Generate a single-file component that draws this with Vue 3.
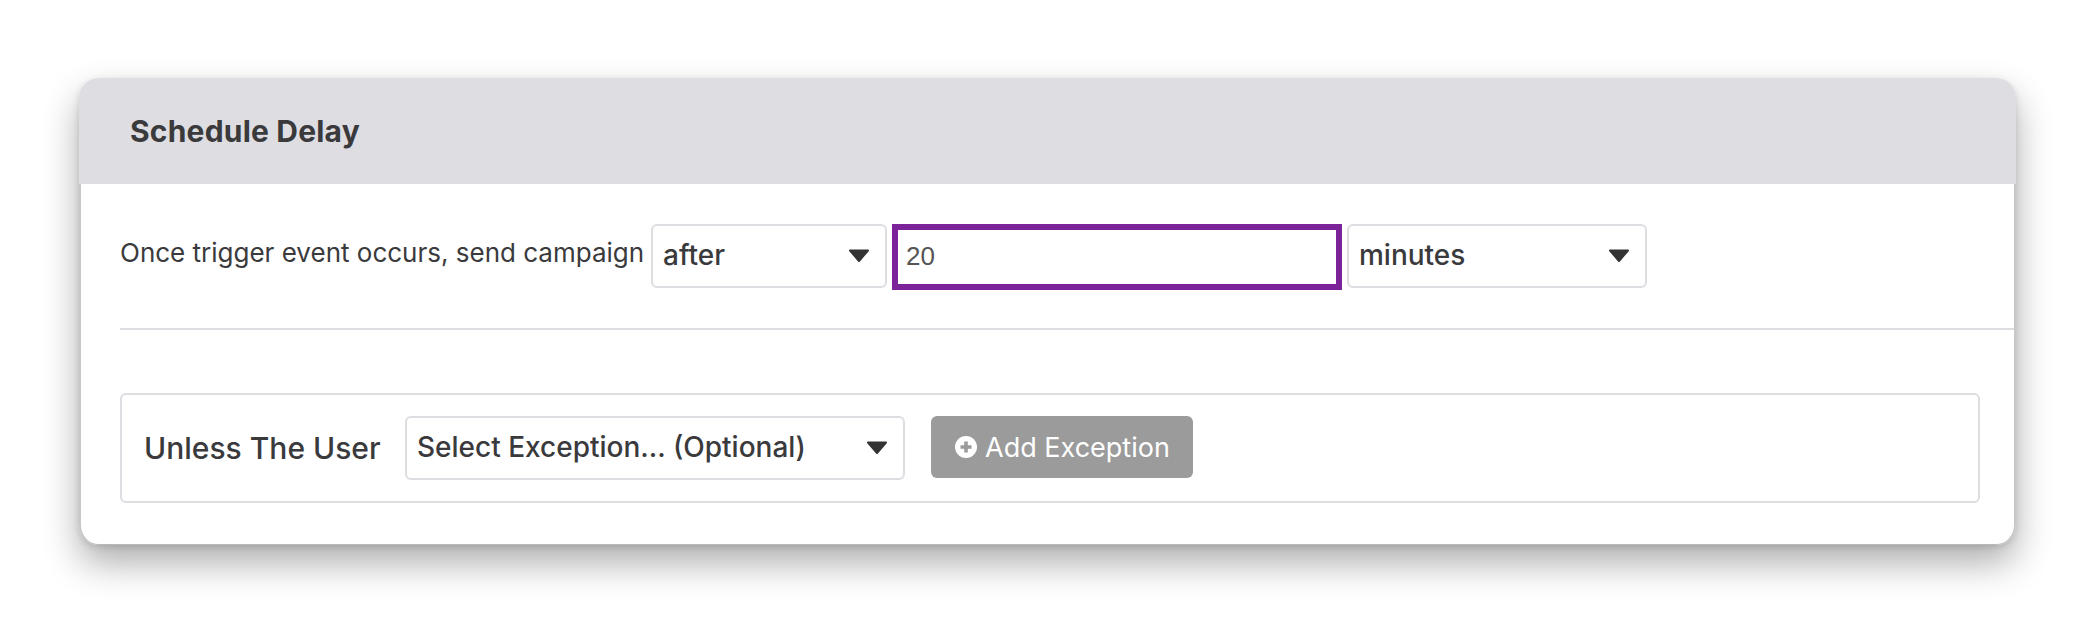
<template>
  <div class="page">
    <div class="card">
      <div class="card-head">Schedule Delay</div>
      <div class="card-body">
        <div class="row">
          <span class="lead">Once trigger event occurs, send campaign</span>
          <div class="select sel-after">
            <span>after</span>
            <svg class="caret" width="22" height="13" viewBox="0 0 22 13"><path d="M2 1.5h18L11 12z" fill="#333" stroke="#333" stroke-width="2" stroke-linejoin="round"/></svg>
          </div>
          <input class="num" type="text" value="20" />
          <div class="select sel-unit">
            <span>minutes</span>
            <svg class="caret" width="22" height="13" viewBox="0 0 22 13"><path d="M2 1.5h18L11 12z" fill="#333" stroke="#333" stroke-width="2" stroke-linejoin="round"/></svg>
          </div>
        </div>
        <hr class="sep" />
        <div class="except">
          <span class="except-label">Unless The User</span>
          <div class="select sel-except">
            <span>Select Exception... (Optional)</span>
            <svg class="caret" width="22" height="13" viewBox="0 0 22 13"><path d="M2 1.5h18L11 12z" fill="#333" stroke="#333" stroke-width="2" stroke-linejoin="round"/></svg>
          </div>
          <button class="add">
            <svg width="22" height="22" viewBox="0 0 22 22"><circle cx="11" cy="11" r="11" fill="#fff"/><path d="M11 5.5v11M5.5 11h11" stroke="#9b9b9b" stroke-width="3.6"/></svg>
            <span>Add Exception</span>
          </button>
        </div>
      </div>
    </div>
  </div>
</template>
<script setup>
</script>
<style>
html, body { background: #fff; }
</style>
<style scoped>
.page { padding: 78px 78px 80px 79px; font-family: Inter, "Liberation Sans", sans-serif; color: #3a3a3c; }
.card { border-radius: 20px; box-shadow: 0 18px 36px rgba(0,0,0,.32), 0 2px 6px rgba(0,0,0,.12); background: #fff; }
.card-head { height: 106px; box-sizing: border-box; padding: 0 51px; display: flex; align-items: center; background: #dedee2; border-radius: 20px 20px 0 0; font-size: 30px; font-weight: 700; letter-spacing: .2px; }
.card-body { height: 361px; box-sizing: border-box; padding: 40px 0 0 41px; border-radius: 0 0 20px 20px; background: #fff; box-shadow: inset 2px 0 0 #c8c8c8, inset -2px 0 0 #c8c8c8, inset 0 -1px 0 #b8b8b8; }
.row { display: flex; align-items: flex-start; height: 66px; }
.lead { font-size: 26px; line-height: 58px; width: 523px; white-space: nowrap; margin-right: 8px; }
.select { height: 64px; box-sizing: border-box; border: 2px solid #dddde2; border-radius: 6px; background: #fff; display: flex; align-items: center; justify-content: space-between; padding: 0 15px 2px 10px; font-size: 28px; font-weight: 500; white-space: nowrap; }
.sel-after { width: 236px; }
.sel-unit { width: 300px; }
.sel-except { width: 500px; }
.num { width: 450px; height: 66px; box-sizing: border-box; margin: 0 5px; border: 6px solid #7c2399; padding: 0 8px 2px; font-family: "Liberation Sans", sans-serif; font-size: 26px; color: #555; outline: none; background: #fff; }
.sep { margin: 38px 2px 0 0; border: 0; height: 2px; background: #dddde2; }
.except { margin: 63px 36px 0 0; height: 110px; box-sizing: border-box; border: 2px solid #dddde2; border-radius: 6px; display: flex; align-items: center; padding: 0 0 0 22px; }
.except-label { width: 236px; margin-right: 25px; font-size: 30px; font-weight: 500; white-space: nowrap; }
.add { margin-left: 26px; margin-top: -2px; width: 262px; height: 62px; box-sizing: border-box; border: 0; border-radius: 6px; background: #9b9b9b; color: #fff; display: flex; align-items: center; gap: 8px; padding: 0 0 0 24px; font-family: inherit; font-size: 27px; white-space: nowrap; }
</style>
